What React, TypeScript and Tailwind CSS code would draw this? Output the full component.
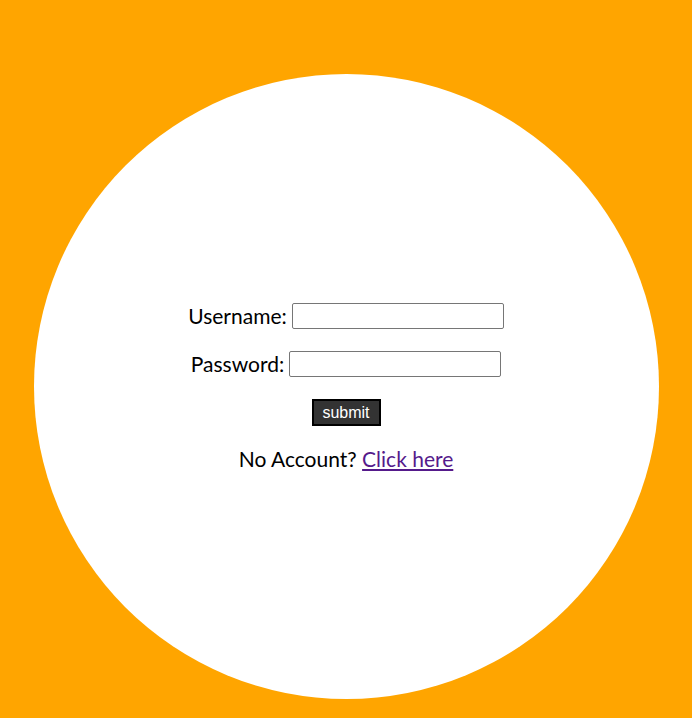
import React from "react";

const App: React.FC = () => {
  return (
    <div className="min-h-[718px] w-full bg-[#ffa500] pt-[74px] font-['Lato',sans-serif]">
      <div className="mx-auto flex h-[625px] w-[625px] flex-col items-center justify-center rounded-full bg-white text-[21px] text-black">
        <div className="mt-[2px] flex h-[26px] items-center gap-[5px]">
          <label htmlFor="username">Username:</label>
          <input
            id="username"
            type="text"
            className="h-[26px] w-[212px] rounded-[2px] border border-[#767676] bg-white px-1 text-[13px]"
          />
        </div>
        <div className="mt-[22px] flex h-[26px] items-center gap-[5px]">
          <label htmlFor="password">Password:</label>
          <input
            id="password"
            type="password"
            className="h-[26px] w-[212px] rounded-[2px] border border-[#767676] bg-white px-1 text-[13px]"
          />
        </div>
        <button
          type="submit"
          className="mt-[22px] h-[27px] w-[69px] border-2 border-black bg-[#333333] font-['Liberation_Sans',Arial,sans-serif] text-[16px] leading-none text-white"
        >
          submit
        </button>
        <p className="mt-[20px] leading-[26px]">
          No Account?{" "}
          <a href="#" className="text-[#551a8b] underline">
            Click here
          </a>
        </p>
      </div>
    </div>
  );
};

export default App;
